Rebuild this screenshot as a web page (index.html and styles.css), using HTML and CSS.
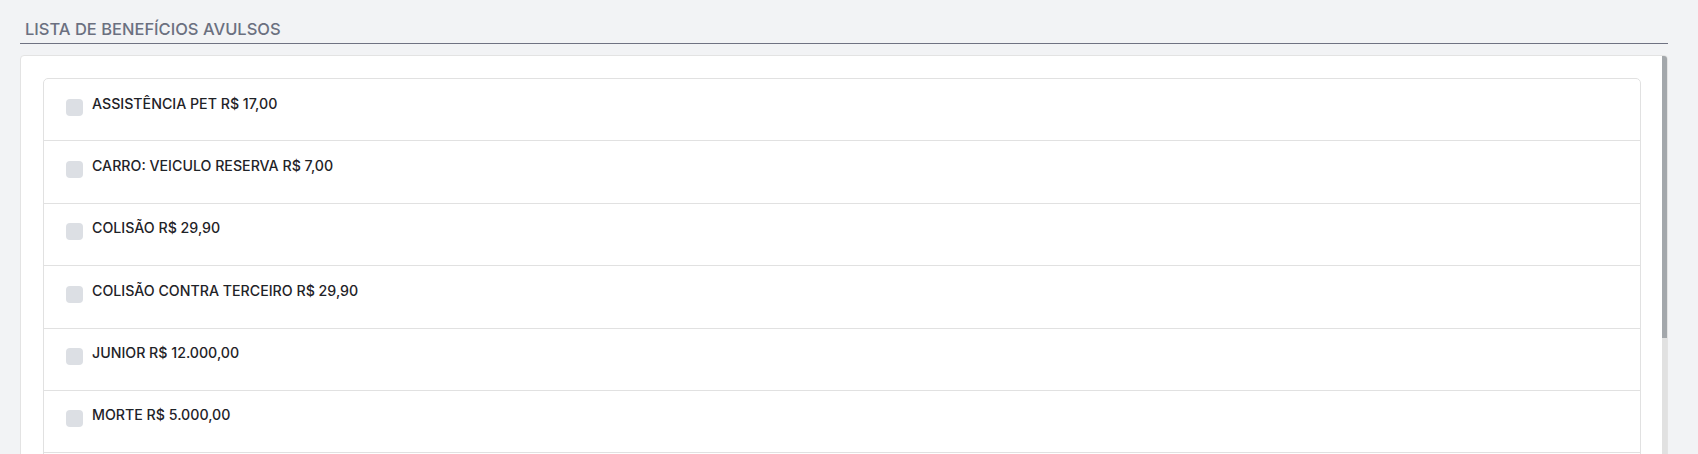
FILE: index.html
```html
<!DOCTYPE html>
<html lang="pt-BR">
<head>
<meta charset="utf-8">
<title>Lista de benefícios avulsos</title>
<link rel="stylesheet" href="styles.css">
</head>
<body>
<main class="page">
  <h2 class="section-title">LISTA DE BENEFÍCIOS AVULSOS</h2>
  <div class="card">
    <ul class="list">
      <li class="item"><label class="option"><span class="check"></span><span class="label-text">ASSISTÊNCIA PET R$ 17,00</span></label></li>
      <li class="item"><label class="option"><span class="check"></span><span class="label-text">CARRO: VEICULO RESERVA R$ 7,00</span></label></li>
      <li class="item"><label class="option"><span class="check"></span><span class="label-text">COLISÃO R$ 29,90</span></label></li>
      <li class="item"><label class="option"><span class="check"></span><span class="label-text">COLISÃO CONTRA TERCEIRO R$ 29,90</span></label></li>
      <li class="item"><label class="option"><span class="check"></span><span class="label-text">JUNIOR R$ 12.000,00</span></label></li>
      <li class="item"><label class="option"><span class="check"></span><span class="label-text">MORTE R$ 5.000,00</span></label></li>
      <li class="item"><label class="option"><span class="check"></span><span class="label-text"></span></label></li>
    </ul>
    <div class="scrollbar"><div class="scroll-thumb"></div></div>
  </div>
</main>
</body>
</html>
```
FILE: styles.css
```css
* { box-sizing: border-box; }
html, body { margin: 0; padding: 0; height: 100%; overflow: hidden; }
body {
  background: #f2f3f5;
  font-family: Inter, "Noto Sans", sans-serif;
  color: #1f2328;
}
.page {
  padding: 17px 30px 0 20px;
}
.section-title {
  margin: 0;
  padding: 0 0 2px 5px;
  font-size: 16.5px;
  line-height: 24px;
  font-weight: 500;
  color: #6b7080;
  border-bottom: 1px solid #6f7282;
}
.card {
  position: relative;
  margin-top: 11px;
  height: 420px;
  background: #fff;
  border: 1px solid #e3e3e3;
  border-radius: 4px;
  padding: 22px 26px 0 22px;
  overflow: hidden;
}
.scrollbar {
  position: absolute;
  top: -1px;
  right: -1px;
  bottom: 0;
  width: 6px;
  background: #e1e1e1;
}
.scroll-thumb {
  height: 283px;
  background: #a3a7ab;
}
.list {
  list-style: none;
  margin: 0;
  padding: 0;
  border: 1px solid #e1e1e1;
  border-radius: 5px;
}
.item {
  height: 62.4px;
  border-bottom: 1px solid #e1e1e1;
  padding: 14.5px 22px 0;
}
.item:last-child { border-bottom: 0; }
.option {
  display: flex;
  align-items: flex-start;
  gap: 9px;
}
.check {
  flex: none;
  width: 17px;
  height: 17px;
  margin-top: 5px;
  border-radius: 4px;
  background: #dcdfe4;
}
.label-text {
  font-size: 14.2px;
  line-height: 20px;
  font-weight: 500;
  color: #1f2328;
}
```
